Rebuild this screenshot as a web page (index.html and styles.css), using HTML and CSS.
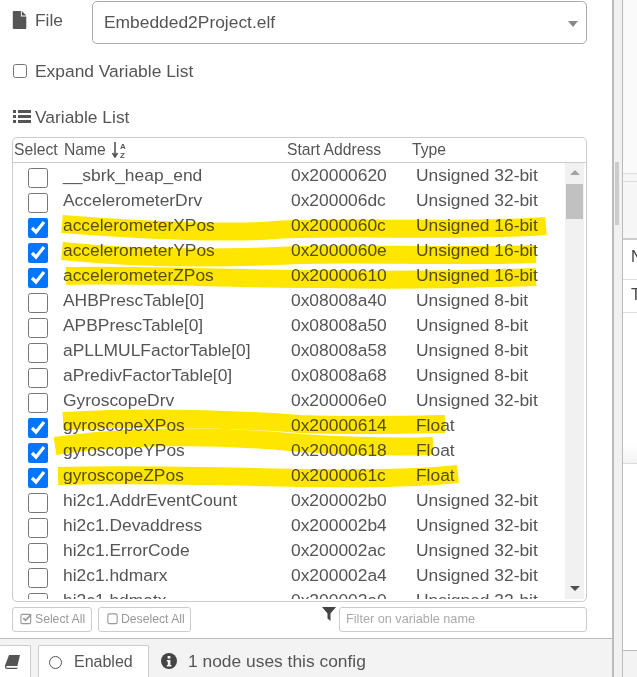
FILE: index.html
```html
<!DOCTYPE html>
<html>
<head>
<meta charset="utf-8">
<title>Variable List</title>
<link rel="stylesheet" href="styles.css">
</head>
<body>
<div class="page">
  <main class="panel">
    <div class="content">
      <div class="file-row">
        <label class="file-label">
          <svg class="file-icon" viewBox="0 0 16 20"><path d="M1 0h8v6h6v13a1 1 0 0 1-1 1H1a1 1 0 0 1-1-1V1a1 1 0 0 1 1-1zM10 0l5 5h-5z" fill="#555"/></svg>
          File
        </label>
        <div class="select">Embedded2Project.elf<span class="caret"></span></div>
      </div>
      <label class="expand"><input type="checkbox" class="small-check">Expand Variable List</label>
      <div class="list-title">
        <svg class="list-icon" viewBox="0 0 18 14"><path d="M0 0h3v3H0zM5 0h13v3H5zM0 5h3v3H0zM5 5h13v3H5zM0 10h3v3H0zM5 10h13v3H5z" fill="#555"/></svg>
        Variable List
      </div>
      <div class="table">
        <div class="thead">
          <span class="th-select">Select</span>
          <span class="th-name">Name
            <svg class="sort-icon" viewBox="0 0 16 16"><path d="M4 0v14M1.5 11 4 15l2.5-4" stroke="#555" stroke-width="1.6" fill="none"/><text x="9" y="7" class="sort-letter">A</text><text x="9" y="15.5" class="sort-letter">Z</text></svg>
          </span>
          <span class="th-addr">Start Address</span>
          <span class="th-type">Type</span>
        </div>
        <div class="tbody">
          <div class="rows">
            <div class="row"><input type="checkbox"><span class="name">__sbrk_heap_end</span><span class="addr">0x20000620</span><span class="type">Unsigned 32-bit</span></div>
            <div class="row"><input type="checkbox"><span class="name">AccelerometerDrv</span><span class="addr">0x200006dc</span><span class="type">Unsigned 32-bit</span></div>
            <div class="row"><input type="checkbox" checked><span class="name">accelerometerXPos</span><span class="addr">0x2000060c</span><span class="type">Unsigned 16-bit</span></div>
            <div class="row"><input type="checkbox" checked><span class="name">accelerometerYPos</span><span class="addr">0x2000060e</span><span class="type">Unsigned 16-bit</span></div>
            <div class="row"><input type="checkbox" checked><span class="name">accelerometerZPos</span><span class="addr">0x20000610</span><span class="type">Unsigned 16-bit</span></div>
            <div class="row"><input type="checkbox"><span class="name">AHBPrescTable[0]</span><span class="addr">0x08008a40</span><span class="type">Unsigned 8-bit</span></div>
            <div class="row"><input type="checkbox"><span class="name">APBPrescTable[0]</span><span class="addr">0x08008a50</span><span class="type">Unsigned 8-bit</span></div>
            <div class="row"><input type="checkbox"><span class="name">aPLLMULFactorTable[0]</span><span class="addr">0x08008a58</span><span class="type">Unsigned 8-bit</span></div>
            <div class="row"><input type="checkbox"><span class="name">aPredivFactorTable[0]</span><span class="addr">0x08008a68</span><span class="type">Unsigned 8-bit</span></div>
            <div class="row"><input type="checkbox"><span class="name">GyroscopeDrv</span><span class="addr">0x200006e0</span><span class="type">Unsigned 32-bit</span></div>
            <div class="row"><input type="checkbox" checked><span class="name">gyroscopeXPos</span><span class="addr">0x20000614</span><span class="type">Float</span></div>
            <div class="row"><input type="checkbox" checked><span class="name">gyroscopeYPos</span><span class="addr">0x20000618</span><span class="type">Float</span></div>
            <div class="row"><input type="checkbox" checked><span class="name">gyroscopeZPos</span><span class="addr">0x2000061c</span><span class="type">Float</span></div>
            <div class="row"><input type="checkbox"><span class="name">hi2c1.AddrEventCount</span><span class="addr">0x200002b0</span><span class="type">Unsigned 32-bit</span></div>
            <div class="row"><input type="checkbox"><span class="name">hi2c1.Devaddress</span><span class="addr">0x200002b4</span><span class="type">Unsigned 32-bit</span></div>
            <div class="row"><input type="checkbox"><span class="name">hi2c1.ErrorCode</span><span class="addr">0x200002ac</span><span class="type">Unsigned 32-bit</span></div>
            <div class="row"><input type="checkbox"><span class="name">hi2c1.hdmarx</span><span class="addr">0x200002a4</span><span class="type">Unsigned 32-bit</span></div>
            <div class="row"><input type="checkbox"><span class="name">hi2c1.hdmatx</span><span class="addr">0x200002a0</span><span class="type">Unsigned 32-bit</span></div>
          </div>
          <div class="scrollbar">
            <span class="arrow-up"></span>
            <span class="thumb"></span>
            <span class="arrow-down"></span>
          </div>
        </div>
      </div>
      <div class="tools">
        <button class="btn btn-select">
          <svg class="btn-icon" viewBox="0 0 14 14"><rect x="1" y="2.5" width="10.5" height="10" rx="1.5" fill="none" stroke="#999" stroke-width="1.2"/><path d="m3.5 6.5 2.5 2.5 6-6.5" fill="none" stroke="#999" stroke-width="1.8"/></svg>Select All</button>
        <button class="btn btn-deselect">
          <svg class="btn-icon" viewBox="0 0 14 14"><rect x="2" y="2" width="10" height="10.5" rx="1.5" fill="none" stroke="#999" stroke-width="1.2"/></svg>Deselect All</button>
        <svg class="funnel" viewBox="0 0 14 14"><path d="M0 0h14L8.5 6.5V14L5.5 11.5V6.5z" fill="#444"/></svg>
        <input class="filter" type="text" placeholder="Filter on variable name">
      </div>
    </div>
    <footer class="footer">
      <div class="tab tab-book">
        <svg class="book-icon" viewBox="0 0 16 14"><path d="M4 0h11l-2.6 11H2.2C1 11 .8 12.8 2 12.8h10.6l-.3 1.2H2C0 14-.4 12 .2 10z" fill="#555"/></svg>
      </div>
      <div class="tab tab-enabled"><span class="ring"></span>Enabled</div>
      <div class="usage">
        <svg class="info-icon" viewBox="0 0 16 16"><circle cx="8" cy="8" r="8" fill="#444"/><rect x="6.6" y="3" width="2.8" height="2.6" fill="#f3f3f3"/><path d="M5.8 7h3.6v5h1v1.4H5.8V12h1V8.4h-1z" fill="#f3f3f3"/></svg>
        1 node uses this config
      </div>
    </footer>
  </main>
  <aside class="side">
    <span class="side-thumb"></span>
    <div class="side-panel">
      <div class="side-a"></div>
      <div class="side-b"></div>
      <div class="side-c"></div>
      <div class="side-row">N</div>
      <div class="side-row">T</div>
      <div class="side-d"></div>
      <div class="side-e"></div>
      <div class="side-f"></div>
    </div>
  </aside>
</div>
<svg class="marker" viewBox="0 0 637 677">
  <path class="ink" d="M62 224C140 230 230 234 275 230C340 226 470 232 546 226"/>
  <path class="ink" d="M62 251C140 259 220 259 300 255C370 253 450 257 536 254"/>
  <path class="ink" d="M66 276C140 274 230 279 320 279C370 280 450 280 536 277"/>
  <path class="ink" d="M63 421C140 417 220 418 300 424C360 426 400 425 445 424"/>
  <path class="ink" d="M55 446C120 436 210 434 300 443C360 447 400 447 433 446"/>
  <path class="ink" d="M58 476C130 474 220 476 300 478C360 479 410 479 458 474"/>
</svg>
</body>
</html>
```
FILE: styles.css
```css
* { box-sizing: border-box; }
html, body { margin: 0; height: 100%; }
body {
  width: 637px;
  height: 677px;
  overflow: hidden;
  position: relative;
  background: #fff;
  color: #555;
  font-family: "Liberation Sans", Arial, sans-serif;
  font-size: 17.4px;
}
.page { display: flex; height: 677px; }
.panel {
  width: 612px;
  display: flex;
  flex-direction: column;
  height: 677px;
}
.content { flex: 1; padding: 0 25px 0 12px; min-height: 0; }

.file-row { display: flex; align-items: flex-start; height: 44px; }
.file-label { width: 80px; display: flex; align-items: center; gap: 7px; height: 40px; }
.file-icon { width: 16px; height: 18px; }
.select {
  flex: 1;
  height: 43px;
  margin-top: 1px;
  border: 1px solid #aaa;
  border-radius: 5px;
  padding: 0 11px;
  line-height: 41px;
  position: relative;
}
.caret {
  position: absolute;
  right: 8px;
  top: 19px;
  border-left: 5px solid transparent;
  border-right: 5px solid transparent;
  border-top: 6px solid #888;
}
.expand { display: flex; align-items: center; height: 20px; margin-top: 17px; padding-left: 1px; }
.small-check { width: 14px; height: 14px; margin: 0 8px 0 0; }

.list-title { display: flex; align-items: center; gap: 4px; height: 20px; margin-top: 26px; padding-left: 1px; }
.list-icon { width: 18px; height: 14px; }

.table {
  margin-top: 10px;
  height: 465px;
  border: 1px solid #ccc;
  border-radius: 5px;
  display: flex;
  flex-direction: column;
  overflow: hidden;
}
.thead {
  display: flex;
  align-items: center;
  height: 25px;
  flex: none;
  border-bottom: 1px solid #ccc;
  font-size: 15.7px;
  position: relative;
}
.th-select { width: 51px; padding-left: 1px; }
.th-name { width: 223px; display: flex; align-items: center; gap: 5px; }
.sort-icon { width: 16px; height: 16px; }
.sort-letter { font-size: 8px; font-weight: bold; fill: #555; font-family: "Liberation Sans", Arial, sans-serif; }
.th-addr { width: 125px; }
.tbody { height: 436px; display: flex; min-height: 0; overflow: hidden; flex: none; padding-right: 2px; }
.rows { flex: 1; overflow: hidden; }
.row { display: flex; align-items: center; height: 25px; }
.row input { width: 20px; height: 20px; margin: 0 15px 0 15px; flex: none; accent-color: #0075ff; position: relative; top: 2px; }
.name { width: 228px; white-space: nowrap; }
.addr { width: 125px; }
.type { white-space: nowrap; }
.scrollbar {
  width: 19px;
  flex: none;
  background: #f1f1f1;
  display: flex;
  flex-direction: column;
  align-items: center;
}
.arrow-up {
  margin-top: 7px;
  border-left: 5px solid transparent;
  border-right: 5px solid transparent;
  border-bottom: 5px solid #a3a3a3;
}
.thumb { width: 17px; height: 35px; background: #c1c1c1; margin-top: 9px; }
.arrow-down {
  margin-top: auto;
  margin-bottom: 8px;
  border-left: 5px solid transparent;
  border-right: 5px solid transparent;
  border-top: 5px solid #505050;
}

.tools { display: flex; align-items: flex-start; margin-top: 5px; height: 25px; }
.btn {
  height: 25px;
  margin: 0;
  padding: 0 0 2px 7px;
  background: #fff;
  border: 1px solid #ccc;
  border-radius: 3px;
  color: #999;
  font: 12.2px "Liberation Sans", Arial, sans-serif;
  white-space: nowrap;
  display: flex;
  align-items: center;
  gap: 2px;
}
.btn-select { width: 80px; }
.btn-deselect { width: 93px; margin-left: 6px; }
.btn-icon { width: 13px; height: 13px; flex: none; }
.funnel { width: 14px; height: 14px; margin-left: 131px; margin-right: 3px; flex: none; }
.filter {
  width: 248px;
  height: 25px;
  border: 1px solid #ccc;
  border-radius: 3px;
  padding: 0 6px 2px;
  font: 12.7px "Liberation Sans", Arial, sans-serif;
  color: #555;
}
.filter::placeholder { color: #aaa; opacity: 1; }

.footer {
  height: 39px;
  flex: none;
  background: #f3f3f3;
  border-top: 1px solid #bbb;
  display: flex;
  align-items: flex-start;
}
.tab { height: 39px; background: #fff; border: 1px solid #ccc; border-bottom: none; border-radius: 2px 2px 0 0; margin-top: 6px; display: flex; align-items: center; font-size: 16px; padding-bottom: 6px; }
.tab-book { width: 32px; margin-left: -1px; justify-content: flex-end; padding-right: 9px; }
.book-icon { width: 16px; height: 14px; }
.tab-enabled { width: 111px; margin-left: 7px; padding-left: 10px; gap: 12px; }
.ring { width: 13px; height: 13px; border: 1.5px solid #555; border-radius: 50%; }
.usage { display: flex; align-items: center; gap: 11px; margin-left: 12px; margin-top: 12px; height: 20px; }
.info-icon { width: 16px; height: 16px; }

.side { flex: 1; position: relative; border-left: 2px solid #bbb; background: #f1f1f1; }
.side-thumb { position: absolute; left: 1px; top: 162px; width: 4px; height: 63px; background: #ccc; }
.side-panel { position: absolute; left: 8px; right: 0; top: 0; bottom: 0; border-left: 1px solid #bbb; background: #fff; display: flex; flex-direction: column; }
.side-a { height: 174px; border-bottom: 1px solid #ddd; background: #fafafa; }
.side-b { height: 8px; background: #f6f6f6; border-bottom: 1px solid #ddd; }
.side-c { height: 58px; border-bottom: 2px solid #ccc; background: #f6f6f6; }
.side-row { height: 40px; border-bottom: 1px solid #ddd; padding: 8px 0 0 8px; color: #444; font-size: 16px; }
.side-row + .side-row { height: 33px; padding-top: 6px; }
.side-d { height: 151px; background: linear-gradient(#fff 88%, #f3f3f3); border-bottom: 1px solid #ddd; }
.side-e { height: 187px; border-bottom: 1px solid #bbb; }
.side-f { flex: 1; background: #f3f3f3; }

.marker { position: absolute; left: 0; top: 0; width: 637px; height: 677px; pointer-events: none; mix-blend-mode: multiply; }
.ink { fill: none; stroke: #ffe600; stroke-width: 18; }
```
